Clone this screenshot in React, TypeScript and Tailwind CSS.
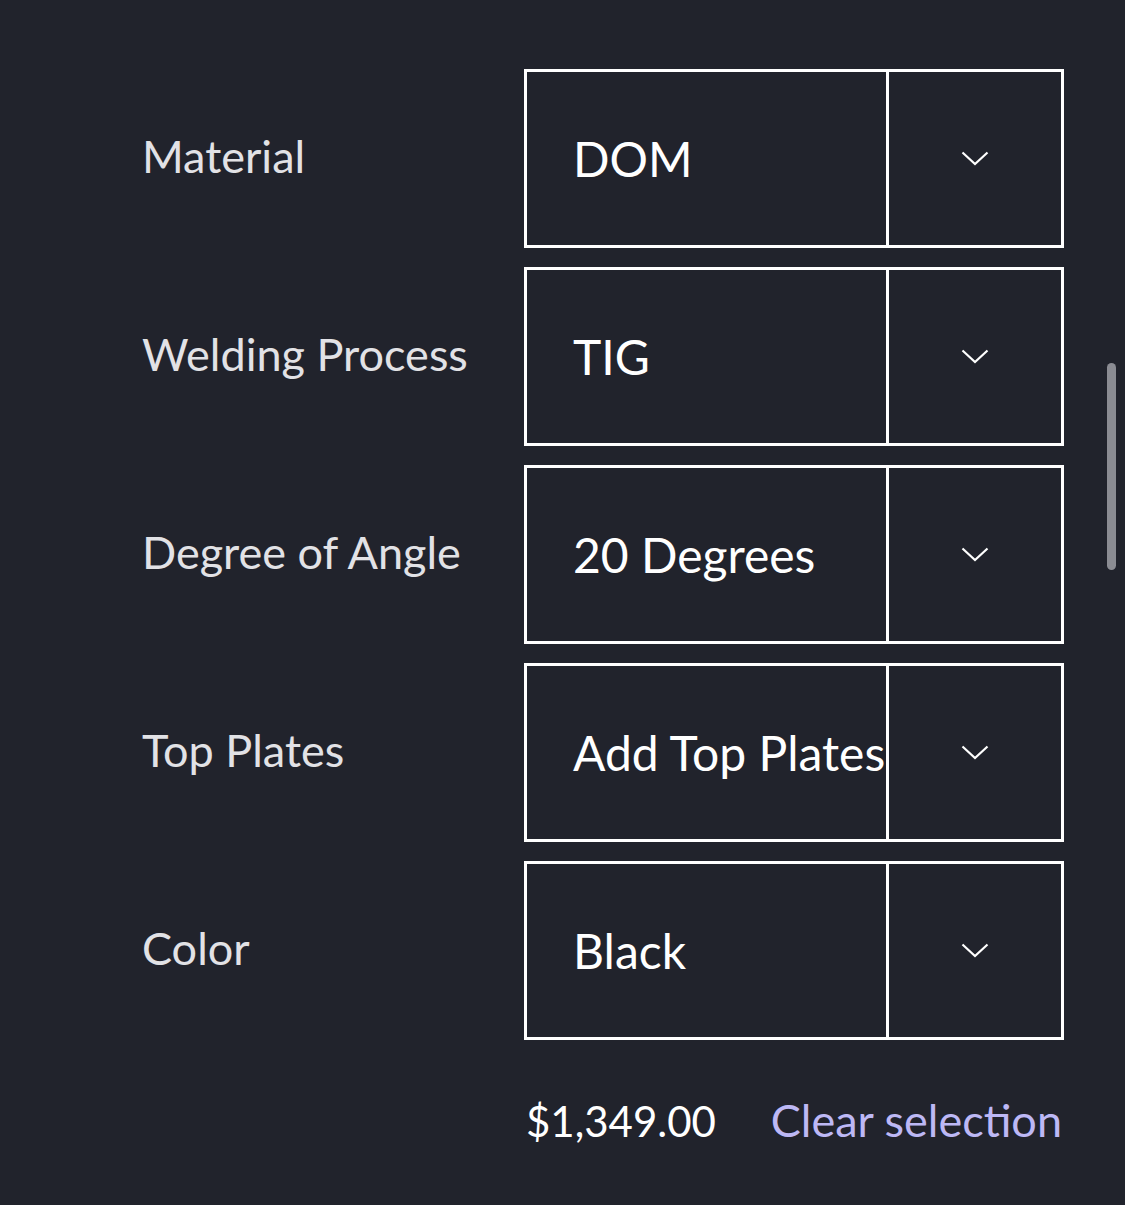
import { useState } from 'react';

const options: { label: string; value: string; choices: string[] }[] = [
  { label: 'Material', value: 'DOM', choices: ['DOM', 'HREW', 'Chromoly'] },
  { label: 'Welding Process', value: 'TIG', choices: ['TIG', 'MIG'] },
  { label: 'Degree of Angle', value: '20 Degrees', choices: ['10 Degrees', '20 Degrees', '30 Degrees'] },
  { label: 'Top Plates', value: 'Add Top Plates', choices: ['Add Top Plates', 'No Top Plates'] },
  { label: 'Color', value: 'Black', choices: ['Black', 'Silver', 'Red'] },
];

function Chevron() {
  return (
    <svg width="28" height="15" viewBox="0 0 28 15" fill="none">
      <path d="M1.5 1.5 L14 13 L26.5 1.5" stroke="#ffffff" strokeWidth="2.2" />
    </svg>
  );
}

function SelectBox({ value }: { value: string }) {
  return (
    <div className="relative h-[179px] w-[540px] border-[3px] border-white overflow-hidden">
      <div className="h-full flex items-center pl-[46px] pr-[170px] whitespace-nowrap text-white text-[48px] leading-none">
        {value}
      </div>
      <div className="absolute top-0 right-0 h-full w-[175px] border-l-[3px] border-white bg-[#21232c] flex items-center justify-center">
        <Chevron />
      </div>
    </div>
  );
}

export default function App() {
  const [vals] = useState(options.map(o => o.value));
  return (
    <div
      className="relative w-[1125px] h-[1205px] bg-[#21232c] overflow-hidden"
      style={{ fontFamily: 'Lato, "Noto Sans", sans-serif' }}
    >
      <div className="pl-[142px] pt-[69px] flex flex-col gap-[19px]">
        {options.map((o, i) => (
          <div key={o.label} className="flex items-center">
            <div className="w-[382px] pb-[4px] text-[45px] text-[#e2e2e6] leading-none">{o.label}</div>
            <SelectBox value={vals[i]} />
          </div>
        ))}
        <div className="flex items-center pl-[382px] mt-[39px] w-[922px]">
          <div className="pl-[2px] text-[42px] text-white leading-none">$1,349.00</div>
          <div className="ml-auto pr-[2px] text-[45px] text-[#bdb8f5] leading-none">Clear selection</div>
        </div>
      </div>
      <div className="absolute right-[9px] top-[363px] w-[9px] h-[207px] rounded-full bg-[#8b8c93]" />
    </div>
  );
}
